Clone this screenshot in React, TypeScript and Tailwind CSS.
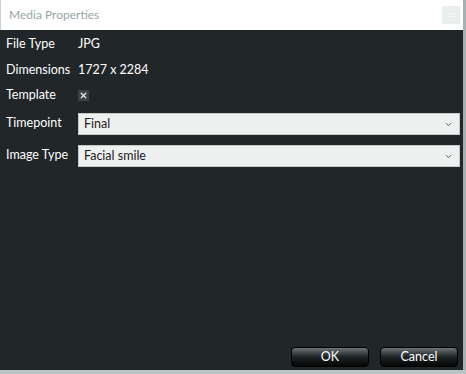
import { ChevronDown, X } from 'lucide-react';

const font = { fontFamily: 'Lato, "Open Sans", sans-serif' };

const Select = ({ value }: { value: string }) => (
  <div className="flex-1 h-[22px] mr-[3px] flex items-center justify-between bg-[#eef0f0] border border-[#c4cacb] pl-[5px] pr-[6px] text-[12.5px] text-[#1c1c1c]">
    <span>{value}</span>
    <ChevronDown className="w-[9px] h-[9px] text-[#4f5859]" strokeWidth={2.5} />
  </div>
);

export default function App() {
  return (
    <div className="w-[466px] h-[374px] flex flex-col bg-[#b9c4c4] overflow-hidden" style={font}>
      <div className="flex-1 flex border-r-[3px] border-[#a6b0b0]">
        <div className="flex-1 flex flex-col">
          {/* Title bar */}
          <div className="h-[30px] bg-white border-l border-[#c9d2d2] flex items-center justify-between pl-[8px] pr-[3px]">
            <span className="text-[12px] text-[#98a6a6]">Media Properties</span>
            <div className="w-[18px] h-[18px] bg-[#e9eeee] flex items-center justify-center">
              <div className="w-[6px] h-[4px] border-y border-[#f6f8f8]"></div>
            </div>
          </div>

          {/* Body */}
          <div className="flex-1 bg-[#212628] flex flex-col text-[12.5px] text-white pl-[6px]">
            <div className="mt-[2px] h-[24px] flex items-center">
              <span className="w-[72px]">File Type</span>
              <span>JPG</span>
            </div>
            <div className="h-[28px] flex items-center">
              <span className="w-[72px]">Dimensions</span>
              <span>1727 x 2284</span>
            </div>
            <div className="h-[22px] flex items-center">
              <span className="w-[72px]">Template</span>
              <div className="w-[11px] h-[11px] bg-[#3a4244] flex items-center justify-center">
                <X className="w-[9px] h-[9px] text-[#e6eaea]" strokeWidth={3.5} />
              </div>
            </div>
            <div className="mt-[7px] flex items-center">
              <span className="w-[72px] -mt-[2px]">Timepoint</span>
              <Select value="Final" />
            </div>
            <div className="mt-[10px] flex items-center">
              <span className="w-[72px] -mt-[2px]">Image Type</span>
              <Select value="Facial smile" />
            </div>

            <div className="mt-auto mb-[3px] flex justify-end gap-[11px] pr-[5px]">
              <button className="w-[78px] h-[20px] rounded-[4px] border border-black bg-gradient-to-b from-[#6c7778] via-[#1e2324] to-[#050606] text-white text-[12.5px] leading-none">
                OK
              </button>
              <button className="w-[78px] h-[20px] rounded-[4px] border border-black bg-gradient-to-b from-[#6c7778] via-[#1e2324] to-[#050606] text-white text-[12.5px] leading-none">
                Cancel
              </button>
            </div>
          </div>
        </div>
      </div>
      <div className="h-[4px]"></div>
    </div>
  );
}
